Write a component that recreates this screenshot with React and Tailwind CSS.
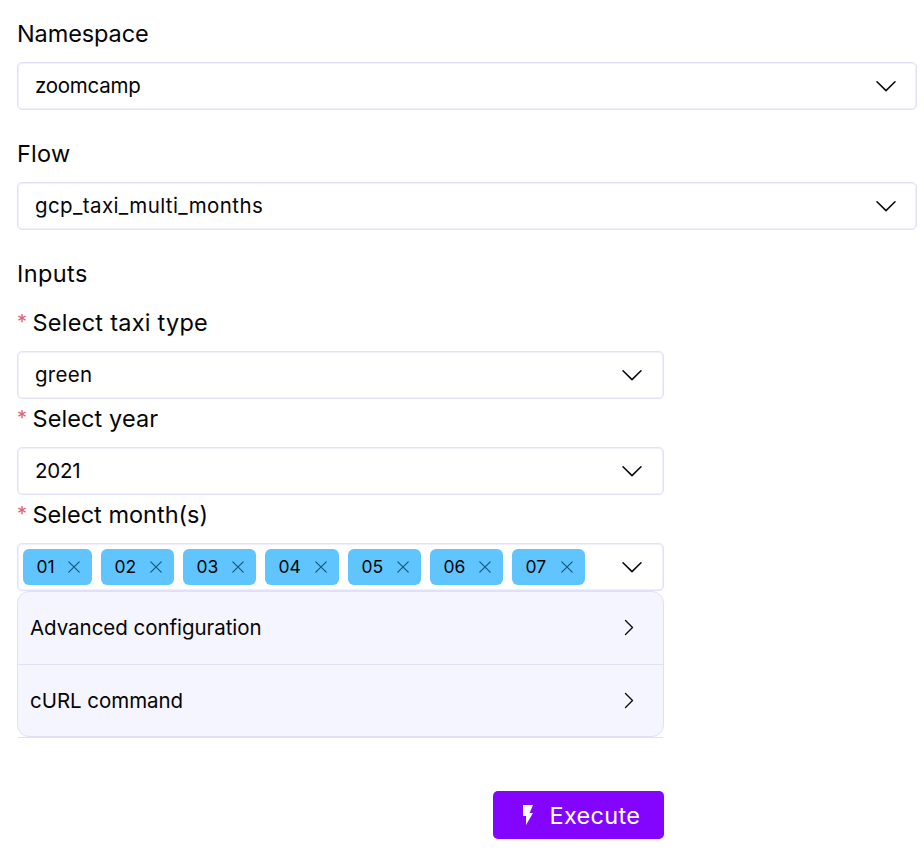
const BORDER = "border border-[#e3e0f9] shadow-[inset_0_0_0_1px_#f1effc]";

function ChevronDown({ className = "" }) {
  return (
    <svg className={className} width="22" height="14" viewBox="0 0 22 14" fill="none" stroke="#0b0b0d" strokeWidth="1.6" strokeLinecap="round" strokeLinejoin="round">
      <path d="M2 2.8 11 11.6 20 2.8" />
    </svg>
  );
}

function ChevronRight() {
  return (
    <svg width="12" height="18" viewBox="0 0 12 18" fill="none" stroke="#0b0b0d" strokeWidth="1.4" strokeLinecap="round" strokeLinejoin="round">
      <path d="M2.5 1.6 9.5 8.6 2.5 15.6" />
    </svg>
  );
}

function Label({ children, required, textClass }) {
  return (
    <div className="flex h-7 items-center text-[23.5px] leading-7 whitespace-nowrap">
      {required && <span className="w-[15.5px] pb-[3px] text-[20px] leading-6 text-[#e0626f]">*</span>}
      <span className={textClass}>{children}</span>
    </div>
  );
}

function Select({ value, textClass, className = "pr-[19px]", iconClass }) {
  return (
    <div className={`mt-3.5 flex h-12 items-center justify-between rounded-[5px] pl-[17px] text-[20.5px] ${className} ${BORDER}`}>
      <span className={textClass}>{value}</span>
      <ChevronDown className={iconClass} />
    </div>
  );
}

const months = [
  ["01", "w-[69px]"],
  ["02", "w-[73px]"],
  ["03", "w-[73px]"],
  ["04", "w-[74px]"],
  ["05", "w-[73px]"],
  ["06", "w-[73px]"],
  ["07", "w-[73px]"],
];

function Chip({ label, width }) {
  return (
    <div className={`flex h-9 items-center justify-between rounded-[6px] bg-[#60c4ff] pr-3 pl-[13.5px] text-[17.5px] ${width}`}>
      <span className="pt-px">{label}</span>
      <svg width="12" height="12" viewBox="0 0 12 12" fill="none" stroke="#14587f" strokeWidth="1.2" strokeLinecap="round">
        <path d="M0.8 0.8 11.2 11.2M11.2 0.8 0.8 11.2" />
      </svg>
    </div>
  );
}

function Row({ children, className, textClass }) {
  return (
    <div className={`flex items-center justify-between pr-[28px] pl-[12px] text-[20.5px] ${className}`}>
      <span className={textClass}>{children}</span>
      <ChevronRight />
    </div>
  );
}

export default function App() {
  return (
    <div className="h-[858px] w-[924px] bg-white pt-5 pr-[7px] pl-[17px] font-['Inter','Liberation_Sans',sans-serif] text-[#050507]">
      <Label textClass="tracking-[-0.1px]">Namespace</Label>
      <Select value="zoomcamp" textClass="tracking-[-0.25px]" />
      <div className="h-[30px]" />
      <Label textClass="tracking-[0.25px]">Flow</Label>
      <Select value="gcp_taxi_multi_months" textClass="tracking-[0.4px]" />
      <div className="h-[30px]" />
      <Label textClass="tracking-[0.4px]">Inputs</Label>

      <div className="mt-[21px] w-[647px]">
        <Label required textClass="tracking-[0.25px]">Select taxi type</Label>
        <Select value="green" textClass="tracking-[0.3px]" className="pr-5" iconClass="mb-px" />
        <div className="h-1.5" />
        <Label required textClass="tracking-[0.1px]">Select year</Label>
        <Select value="2021" textClass="tracking-[-0.2px]" className="pr-5" iconClass="mb-px" />
        <div className="h-1.5" />
        <Label required textClass="tracking-[0px]">Select month(s)</Label>
        <div className={`mt-3.5 flex h-12 items-center justify-between rounded-[5px] pr-5 pl-[5px] ${BORDER}`}>
          <div className="flex gap-[9px]">
            {months.map(([m, w]) => (
              <Chip key={m} label={m} width={w} />
            ))}
          </div>
          <ChevronDown className="mb-px" />
        </div>

        <div className="h-[146px] rounded-[12px] border border-[#e1def8] bg-[#f5f5ff]">
          <Row className="h-[73px] border-b border-[#e2e1f3]" textClass="tracking-[-0.04px]">Advanced configuration</Row>
          <Row className="h-[71px]" textClass="tracking-[-0.04px] pt-px">cURL command</Row>
        </div>
        <div className="mx-px h-px bg-[#e2e1f3]" />

        <div className="mt-[53px] flex justify-end">
          <button className="flex h-12 w-[171px] items-center rounded-[5px] bg-[#8405ff] pl-[29px] text-[23.5px] text-white">
            <svg width="12" height="20" viewBox="0 0 12 20" fill="#fff">
              <path d="M1 0H11L7.6 8H11L4 20V11H1Z" />
            </svg>
            <span className="ml-[15.5px] pt-px tracking-[0.3px]">Execute</span>
          </button>
        </div>
      </div>
    </div>
  );
}
